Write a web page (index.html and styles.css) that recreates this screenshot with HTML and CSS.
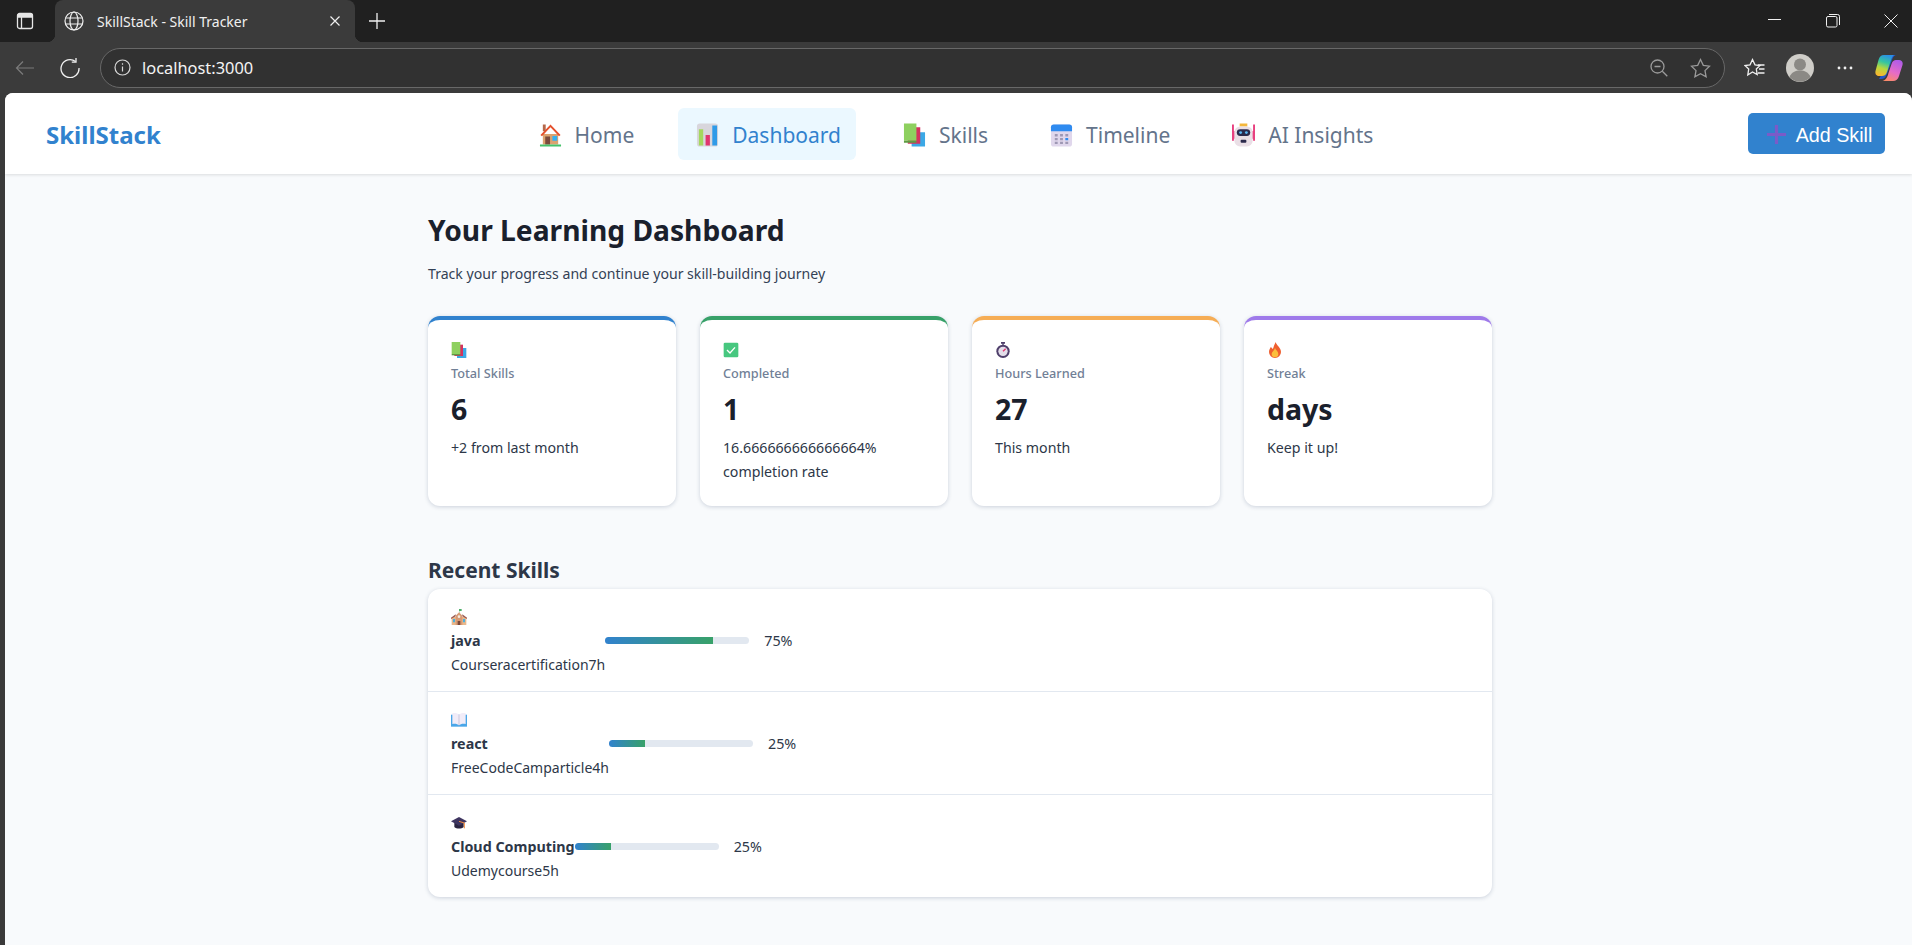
FILE: index.html
```html
<!DOCTYPE html>
<html>
<head>
    <title>SkillStack - Skill Tracker</title>
    <link rel="stylesheet" href="styles.css">
</head>
<body>
    <svg class="defs" width="0" height="0">
        <defs>
            <linearGradient id="copilotA" x1="0.6" y1="0" x2="0.3" y2="1">
                <stop offset="0" stop-color="#2b8fe6"/>
                <stop offset="0.35" stop-color="#35c6a0"/>
                <stop offset="0.65" stop-color="#b7d83e"/>
                <stop offset="1" stop-color="#f8b62f"/>
            </linearGradient>
            <linearGradient id="copilotB" x1="0.7" y1="0" x2="0.3" y2="1">
                <stop offset="0" stop-color="#b05ce8"/>
                <stop offset="0.55" stop-color="#e56bc8"/>
                <stop offset="1" stop-color="#fb8a6a"/>
            </linearGradient>
            <symbol id="i-home" viewBox="0 0 24 24">
                <path d="M4 1h3v7H4z" fill="#b5684a"/>
                <path d="M4 11h16v11H4z" fill="#dba26f"/>
                <path d="M12 1 1.500 12l1.600 1.400L12 4l8.900 9.400L22.500 12z" fill="#e5512d"/>
                <path d="M6.500 13.500h5V22h-5z" fill="#7a4a3c"/>
                <path d="M14 13h5v5h-5z" fill="#35b0f0"/>
                <path d="M1 22h22v2H1z" fill="#45c26a"/>
            </symbol>
            <symbol id="i-chart" viewBox="0 0 24 24">
                <rect x="1" y="0" width="22" height="24" rx="3" fill="#d8d6dc"/>
                <path d="M3 6h4.500v17H3z" fill="#a4d85e"/>
                <path d="M10 12h4.500v11H10z" fill="#e0356f"/>
                <path d="M17 2h5v21h-5z" fill="#2f9be8"/>
            </symbol>
            <symbol id="i-books" viewBox="0 0 24 24">
                <path d="M9 9h14v15H9z" fill="#3ba8e6"/>
                <path d="M5 4h13v17H5z" fill="#d4325f"/>
                <path d="M1 0h13v18H1z" fill="#8ed05f"/>
                <path d="M1 18h13v2H1z" fill="#5f9a45"/>
            </symbol>
            <symbol id="i-calendar" viewBox="0 0 24 24">
                <rect x="1" y="1" width="22" height="23" rx="3" fill="#e0d7ec"/>
                <path d="M1 8V4a3 3 0 0 1 3-3h16a3 3 0 0 1 3 3v4z" fill="#2f8bf0"/>
                <path d="M5 11h3v2.500H5zm5.500 0h3v2.500h-3zM5 15h3v2.500H5zm5.500 0h3v2.500h-3zM5 19h3v2.500H5zm5.500 0h3v2.500h-3zm5.500 0h3v2.500h-3zm0-8h3v2.500h-3z" fill="#9e98b4"/>
                <path d="M16 15h3v2.500h-3z" fill="#2f8bf0"/>
            </symbol>
            <symbol id="i-robot" viewBox="0 0 24 24">
                <path d="M8 0h8v3H8z" fill="#f4b73c"/>
                <path d="M0 1h2v17H0zm22 0h2v17h-2z" fill="#e8407f"/>
                <path d="M0 8h3v8H0zm21 0h3v8h-3z" fill="#e8407f"/>
                <rect x="2.500" y="3" width="19" height="21" rx="6" fill="#eadfe6"/>
                <rect x="5" y="6" width="14" height="7" rx="3.500" fill="#2b2a4c"/>
                <circle cx="9" cy="9.500" r="1.500" fill="#5ab7f2"/>
                <circle cx="15" cy="9.500" r="1.500" fill="#5ab7f2"/>
                <rect x="9" y="17" width="6" height="3" rx="1" fill="#2b2a4c"/>
            </symbol>
            <symbol id="i-check" viewBox="0 0 24 24">
                <rect x="1" y="1" width="22" height="22" rx="2" fill="#47c77f"/>
                <path d="m6 12 4.500 4.500L18 8" fill="none" stroke="#fff" stroke-width="2"/>
            </symbol>
            <symbol id="i-watch" viewBox="0 0 24 24">
                <path d="M9 0h6v2.500H9zM11 2h2v3h-2z" fill="#4f3f6b"/>
                <circle cx="12" cy="14" r="10" fill="#4f3f6b"/>
                <circle cx="12" cy="14" r="7" fill="#e4deea"/>
                <path d="m12 14 4-4" stroke="#e0356f" stroke-width="2"/>
            </symbol>
            <symbol id="i-fire" viewBox="0 0 24 24">
                <path d="M13 0c1 5 8 8 8 15a9 9 0 0 1-18 0c0-4 2-6 3-8 1 2 2 3 3 3 1-3 2-6 4-10z" fill="#ef5f2f"/>
                <path d="M12 9c1 3 5 5 5 9a5 5 0 0 1-10 0c0-3 4-5 5-9z" fill="#fbbf3c"/>
            </symbol>
            <symbol id="i-school" viewBox="0 0 24 24">
                <path d="M12 0h4v3h-3.500v3H12z" fill="#4caf6a"/>
                <path d="M1 12h22v12H1z" fill="#e9b88c"/>
                <path d="M7 10 12 5l5 5v14H7z" fill="#d79a74"/>
                <path d="M0 13 7 8v3l-7 4zm24 0-7-5v3l7 4z" fill="#9a5a52"/>
                <path d="M3 15h3v5H3zm15 0h3v5h-3z" fill="#4fb0dc"/>
                <path d="M10 18h4v6h-4z" fill="#7a4a3c"/>
                <circle cx="12" cy="11.500" r="2" fill="#f5ece2"/>
            </symbol>
            <symbol id="i-book" viewBox="0 0 24 24">
                <path d="M0 4h24v18H0z" fill="#4aa6e8"/>
                <path d="M2 2c4-1 8 0 10 2v16c-2-2-6-3-10-2zM22 2c-4-1-8 0-10 2v16c2-2 6-3 10-2z" fill="#f1ecf8"/>
                <path d="M11.500 4h1v16h-1z" fill="#bcb6d0"/>
            </symbol>
            <symbol id="i-cap" viewBox="0 0 24 24">
                <path d="M5 11h14v7c-3 3-11 3-14 0z" fill="#2a2440"/>
                <path d="M12 3 0 9.500 12 16l12-6.500z" fill="#3e3560"/>
                <path d="M12 9.500 20 12v8" fill="none" stroke="#f28a3c" stroke-width="1.500"/>
            </symbol>
            <symbol id="i-plus" viewBox="0 0 24 24">
                <path d="M10 0h4v10h10v4H14v10h-4V14H0v-4h10z" fill="#7a5bc8"/>
            </symbol>
        </defs>
    </svg>

    <div class="tabstrip">
        <div class="tab-toggle">
            <svg width="18" height="18" viewBox="0 0 18 18" fill="none" stroke="#e6e6e6" stroke-width="1.300"><rect x="1.500" y="1.500" width="15" height="15" rx="2"/><path d="M1.500 5h15M5.500 5v11.500"/><path d="M1.500 3.500h15" stroke-width="3"/></svg>
        </div>
        <div class="tab">
            <svg width="20" height="20" viewBox="0 0 20 20" fill="none" stroke="#f0f0f0" stroke-width="1.200"><circle cx="10" cy="10" r="9"/><ellipse cx="10" cy="10" rx="4" ry="9"/><path d="M1.600 7h16.800M1.600 13h16.800"/></svg>
            <span class="tab-title">SkillStack - Skill Tracker</span>
            <svg class="tab-close" width="12" height="12" viewBox="0 0 12 12" stroke="#f0f0f0" stroke-width="1.200"><path d="m1.500 1.500 9 9m0-9-9 9"/></svg>
        </div>
        <svg class="new-tab" width="18" height="18" viewBox="0 0 18 18" stroke="#f0f0f0" stroke-width="1.300"><path d="M9 1v16M1 9h16"/></svg>
        <div class="window-btns">
            <svg width="14" height="14" viewBox="0 0 14 14" stroke="#f0f0f0" stroke-width="1"><path d="M0 5.500h13"/></svg>
            <svg width="14" height="14" viewBox="0 0 14 14" fill="none" stroke="#f0f0f0" stroke-width="1"><rect x="0.500" y="2.500" width="10.500" height="10.500" rx="1.500"/><path d="M3 .5h8.500a2 2 0 0 1 2 2V11"/></svg>
            <svg width="14" height="14" viewBox="0 0 14 14" stroke="#f0f0f0" stroke-width="1"><path d="m.5.5 13 13m0-13-13 13"/></svg>
        </div>
    </div>

    <div class="toolbar">
        <svg class="tool-back" width="20" height="16" viewBox="0 0 20 16" fill="none" stroke="#7b7b7b" stroke-width="1.200"><path d="M19 8H1.500M8 1.500 1.500 8 8 14.500"/></svg>
        <svg class="tool-reload" width="20" height="20" viewBox="0 0 20 20" fill="none" stroke="#f0f0f0" stroke-width="1.300"><path d="M15.500 3.500A9 9 0 1 0 19 10"/><path d="M16 0v4.200h-4.200"/></svg>
        <div class="address">
            <svg width="17" height="17" viewBox="0 0 17 17" fill="none" stroke="#d8d8d8" stroke-width="1.200"><circle cx="8.500" cy="8.500" r="7.500"/><path d="M8.500 7.500v5M8.500 4.300v1.400"/></svg>
            <span class="url">localhost:3000</span>
            <svg class="addr-zoom" width="18" height="18" viewBox="0 0 18 18" fill="none" stroke="#9a9a9a" stroke-width="1.300"><circle cx="7.500" cy="7.500" r="6.500"/><path d="m12.300 12.300 5 5M4.500 7.500h6"/></svg>
            <svg width="21" height="20" viewBox="0 0 21 20" fill="none" stroke="#9a9a9a" stroke-width="1.300"><path d="m10.500 1.500 2.800 5.800 6.200.9-4.500 4.400 1.100 6.200-5.600-3-5.600 3 1.100-6.200-4.500-4.400 6.200-.9z"/></svg>
        </div>
        <svg class="tool-fav" width="21" height="20" viewBox="0 0 21 20" fill="none" stroke="#f0f0f0" stroke-width="1.300"><path d="M8.500 1.500 11 6.800l5 .7-3.700 3.600.9 5.400L8.500 14 3.800 17l.9-5.900L1 7.500l5-.7z"/><path d="M14 7h6.500M15 11h5.500M14 15h6.500"/></svg>
        <div class="avatar">
            <svg width="28" height="28" viewBox="0 0 28 28"><circle cx="14" cy="14" r="14" fill="#cfcdc8"/><circle cx="14" cy="10.500" r="6" fill="#8b8985"/><path d="M3.500 23c2-5 6-6.500 10.500-6.500S22.500 18 24.500 23a14 14 0 0 1-21 0z" fill="#8b8985"/></svg>
        </div>
        <svg class="tool-more" width="16" height="4" viewBox="0 0 16 4" fill="#f0f0f0"><circle cx="2" cy="2" r="1.400"/><circle cx="8" cy="2" r="1.400"/><circle cx="14" cy="2" r="1.400"/></svg>
        <svg class="tool-copilot" width="28" height="28" viewBox="0 0 28 28"><path d="M17 1h5c-3 0-4 2-5 5l-5 14c-1 3-3 5-6 5h-2z" fill="#2456c8"/><path d="M9 1h11c-2 0-3 2-4 5l-4 12c-1 3-3 4-5 4H4c-3 0-4-2.500-3.500-5l3-11C4.500 2.500 6 1 9 1z" fill="url(#copilotA)"/><path d="M11 27h7c3 0 5-1.500 6-5l3.500-11c.8-3-1-5-3.500-5h-3c-2 0-3.500 1-4.500 4l-3 9c-.8 3-2 7-6 8z" fill="url(#copilotB)"/></svg>
    </div>

    <div class="viewport">
        <header class="navbar">
            <div class="logo">SkillStack</div>
            <nav class="nav-links">
                <a class="nav-link"><svg class="nav-icon"><use href="#i-home"/></svg>Home</a>
                <a class="nav-link active"><svg class="nav-icon"><use href="#i-chart"/></svg>Dashboard</a>
                <a class="nav-link"><svg class="nav-icon"><use href="#i-books"/></svg>Skills</a>
                <a class="nav-link"><svg class="nav-icon"><use href="#i-calendar"/></svg>Timeline</a>
                <a class="nav-link"><svg class="nav-icon"><use href="#i-robot"/></svg>AI Insights</a>
            </nav>
            <button class="add-btn"><svg class="add-icon"><use href="#i-plus"/></svg>Add Skill</button>
        </header>

        <main class="dashboard">
            <h1 class="page-title">Your Learning Dashboard</h1>
            <p class="page-sub">Track your progress and continue your skill-building journey</p>

            <div class="stats">
                <div class="stat-card blue">
                    <svg class="stat-icon"><use href="#i-books"/></svg>
                    <div class="stat-label">Total Skills</div>
                    <div class="stat-value">6</div>
                    <div class="stat-note">+2 from last month</div>
                </div>
                <div class="stat-card green">
                    <svg class="stat-icon"><use href="#i-check"/></svg>
                    <div class="stat-label">Completed</div>
                    <div class="stat-value">1</div>
                    <div class="stat-note">16.666666666666664% completion rate</div>
                </div>
                <div class="stat-card orange">
                    <svg class="stat-icon"><use href="#i-watch"/></svg>
                    <div class="stat-label">Hours Learned</div>
                    <div class="stat-value">27</div>
                    <div class="stat-note">This month</div>
                </div>
                <div class="stat-card purple">
                    <svg class="stat-icon"><use href="#i-fire"/></svg>
                    <div class="stat-label">Streak</div>
                    <div class="stat-value">days</div>
                    <div class="stat-note">Keep it up!</div>
                </div>
            </div>

            <h2 class="section-title">Recent Skills</h2>
            <div class="skill-list">
                <div class="skill-row">
                    <div class="skill-info">
                        <svg class="stat-icon"><use href="#i-school"/></svg>
                        <div class="skill-name">java</div>
                        <div class="skill-meta">Courseracertification7h</div>
                    </div>
                    <div class="skill-progress">
                        <div class="bar"><div class="bar-fill" style="width: 75%"></div></div>
                        <span class="pct">75%</span>
                    </div>
                </div>
                <div class="skill-row">
                    <div class="skill-info">
                        <svg class="stat-icon"><use href="#i-book"/></svg>
                        <div class="skill-name">react</div>
                        <div class="skill-meta">FreeCodeCamparticle4h</div>
                    </div>
                    <div class="skill-progress">
                        <div class="bar"><div class="bar-fill" style="width: 25%"></div></div>
                        <span class="pct">25%</span>
                    </div>
                </div>
                <div class="skill-row">
                    <div class="skill-info">
                        <svg class="stat-icon"><use href="#i-cap"/></svg>
                        <div class="skill-name">Cloud Computing</div>
                        <div class="skill-meta">Udemycourse5h</div>
                    </div>
                    <div class="skill-progress">
                        <div class="bar"><div class="bar-fill" style="width: 25%"></div></div>
                        <span class="pct">25%</span>
                    </div>
                </div>
            </div>
        </main>
    </div>
</body>
</html>
```

FILE: styles.css
```css
* {
    box-sizing: border-box;
}

html,
body {
    height: 100%;
}

body {
    margin: 0;
    overflow: hidden;
    display: flex;
    flex-direction: column;
    background-color: #3a3a3a;
    font-family: "Noto Sans", "Open Sans", sans-serif;
}

.defs {
    position: absolute;
}

/* browser chrome */
.tabstrip {
    height: 42px;
    flex: none;
    display: flex;
    align-items: center;
    background-color: #202020;
    color: #f0f0f0;
}

.tab-toggle {
    width: 50px;
    margin-right: 5px;
    display: flex;
    justify-content: center;
}

.tab {
    position: relative;
    width: 300px;
    height: 42px;
    display: flex;
    align-items: center;
    padding: 0 14px 0 9px;
    background-color: #3b3b3b;
    border-radius: 8px 8px 0 0;
}

.tab::before,
.tab::after {
    content: "";
    position: absolute;
    bottom: 0;
    width: 8px;
    height: 8px;
}

.tab::before {
    left: -8px;
    background: radial-gradient(circle at 0 0, #202020 8px, #3b3b3b 8.500px);
}

.tab::after {
    right: -8px;
    background: radial-gradient(circle at 100% 0, #202020 8px, #3b3b3b 8.500px);
}

.tab-title {
    flex: 1;
    margin-left: 13px;
    font-size: 14px;
}

.new-tab {
    margin-left: 13px;
}

.window-btns {
    margin-left: auto;
    width: 144px;
    display: flex;
    justify-content: space-between;
    padding-right: 14px;
}

.toolbar {
    height: 51px;
    flex: none;
    display: flex;
    align-items: center;
    background-color: #3b3b3b;
}

.tool-back {
    margin-left: 15px;
}

.tool-reload {
    margin-left: 25px;
}

.address {
    width: 1625px;
    height: 40px;
    margin-left: 20px;
    display: flex;
    align-items: center;
    padding: 0 13px;
    background-color: #313131;
    border: 1px solid #686868;
    border-radius: 20px;
}

.url {
    flex: 1;
    margin-left: 11px;
    color: #f4f4f4;
    font-size: 16.400px;
}

.addr-zoom {
    margin-right: 22px;
}

.tool-fav {
    margin-left: 19px;
}

.avatar {
    height: 28px;
    margin-left: 21px;
}

.tool-more {
    margin-left: 23px;
}

.tool-copilot {
    margin-left: 22px;
}

/* page */
.viewport {
    flex: 1;
    margin-left: 5px;
    background-color: #f8fafc;
    border-radius: 8px 8px 0 0;
    overflow: hidden;
}

.navbar {
    height: 81px;
    display: flex;
    align-items: center;
    justify-content: space-between;
    padding: 0 27px 0 41px;
    background-color: #fff;
    box-shadow: 0 1px 3px rgba(0, 0, 0, 0.12);
    position: relative;
}

.logo {
    margin-top: 2px;
    font-size: 24px;
    font-weight: 700;
    color: #3182ce;
}

.nav-links {
    display: flex;
    gap: 29px;
}

.nav-link {
    display: flex;
    align-items: center;
    gap: 13px;
    height: 52px;
    padding: 2px 15px 0 18px;
    border-radius: 6px;
    color: #64748b;
    font-size: 21px;
}

.nav-link.active {
    background-color: #ebf8ff;
    color: #3182ce;
}

.nav-icon {
    width: 23px;
    height: 24px;
}

.add-btn {
    height: 41px;
    width: 137px;
    display: flex;
    align-items: center;
    justify-content: center;
    gap: 10px;
    padding: 3px 0 0 6px;
    border: none;
    border-radius: 5px;
    background-color: #3182ce;
    color: #fff;
    font-family: "Liberation Sans", Arial, sans-serif;
    font-size: 19.700px;
}

.add-icon {
    width: 19px;
    height: 19px;
    margin-top: -2px;
}

.dashboard {
    width: 1064px;
    margin-left: 423px;
    padding-top: 36px;
}

.page-title {
    margin: 0;
    font-size: 28.200px;
    line-height: 40px;
    font-weight: 700;
    color: #1a202c;
}

.page-sub {
    margin: 14px 0 0;
    font-size: 14.100px;
    line-height: 20px;
    color: #334155;
}

.stats {
    display: grid;
    grid-template-columns: repeat(4, 1fr);
    gap: 24px;
    margin-top: 32px;
}

.stat-card {
    height: 190px;
    padding: 22px 23px;
    background-color: #fff;
    border-top: 4px solid #3182ce;
    border-radius: 12px;
    box-shadow: 0 1px 4px rgba(30, 50, 90, 0.2);
}

.stat-card.green {
    border-top-color: #38a169;
}

.stat-card.orange {
    border-top-color: #f6ad55;
}

.stat-card.purple {
    border-top-color: #9f7aea;
}

.stat-icon {
    display: block;
    width: 16px;
    height: 16px;
}

.stat-label {
    margin-top: 6px;
    font-size: 12.700px;
    line-height: 18px;
    font-weight: 500;
    color: #718096;
}

.stat-value {
    margin-top: 7px;
    font-size: 28.500px;
    line-height: 40px;
    font-weight: 700;
    color: #1a202c;
}

.stat-note {
    margin-top: 7px;
    font-size: 14.200px;
    line-height: 24px;
    color: #2d3748;
}

.section-title {
    margin: 49px 0 0;
    font-size: 21px;
    line-height: 30px;
    font-weight: 700;
    color: #2d3748;
}

.skill-list {
    margin-top: 4px;
    background-color: #fff;
    border-radius: 12px;
    box-shadow: 0 1px 4px rgba(30, 50, 90, 0.2);
}

.skill-row {
    height: 103px;
    display: flex;
    align-items: flex-start;
    padding: 20px 23px 0;
    border-bottom: 1px solid #e2e8f0;
}

.skill-row:last-child {
    height: 102px;
    border-bottom: none;
}

.skill-name {
    margin-top: 6px;
    font-size: 14.300px;
    line-height: 20px;
    font-weight: 700;
    color: #2d3748;
}

.skill-meta {
    margin-top: 4px;
    font-size: 14px;
    line-height: 20px;
    color: #2d3748;
}

.skill-progress {
    display: flex;
    align-items: center;
    gap: 15px;
    margin-top: 22px;
}

.bar {
    width: 144px;
    height: 7px;
    background-color: #e2e8f0;
    border-radius: 4px;
    overflow: hidden;
}

.bar-fill {
    height: 100%;
    background: linear-gradient(90deg, #3182ce, #38a169);
}

.pct {
    font-size: 14.300px;
    color: #2d3748;
}
```
